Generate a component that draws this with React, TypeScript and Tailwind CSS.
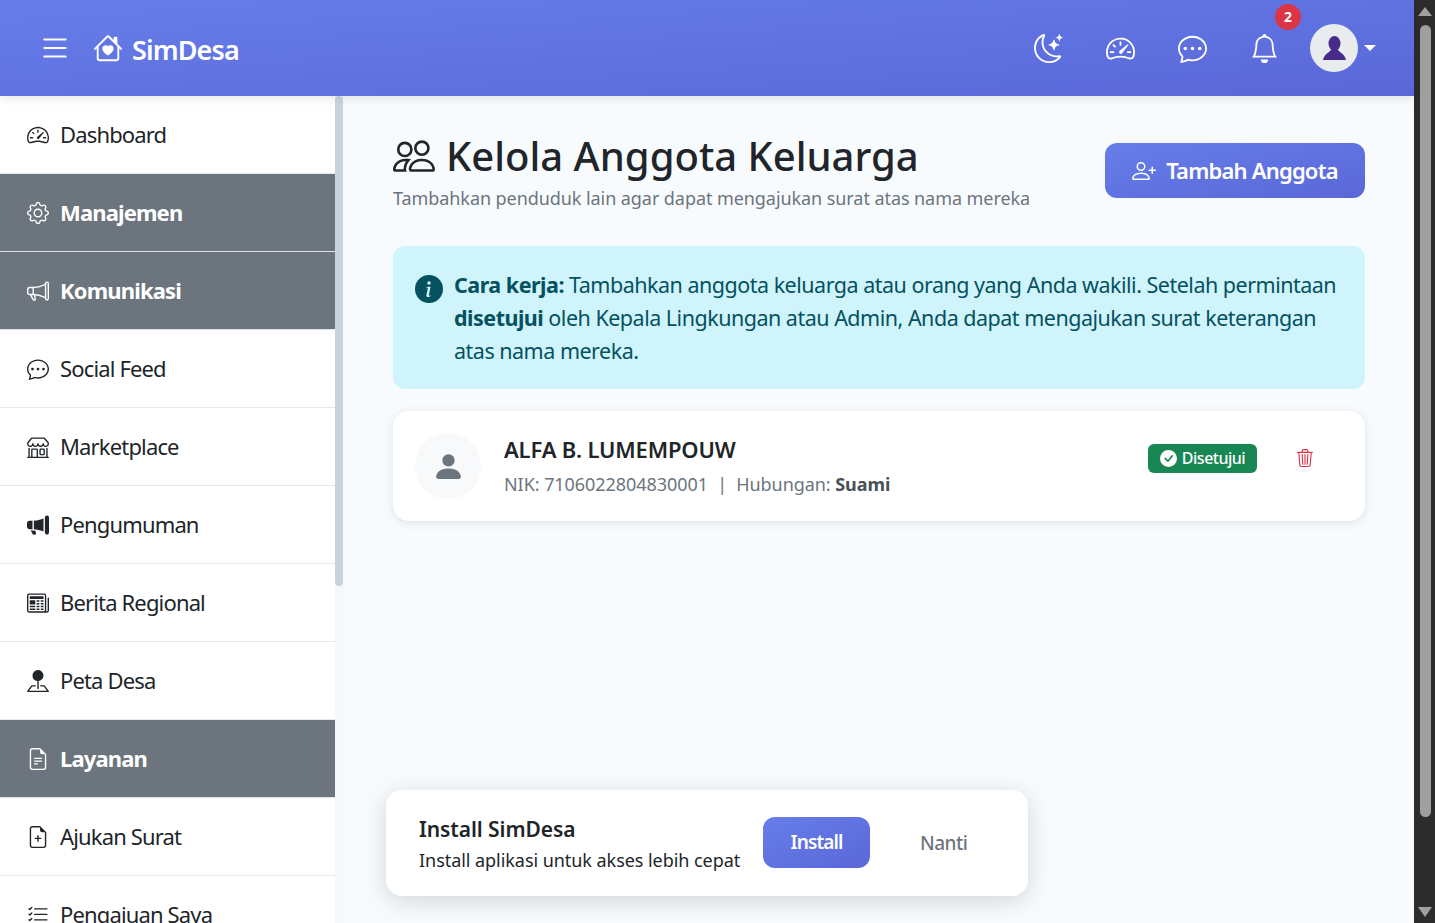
import type { IconType } from "react-icons";
import {
  BsBell,
  BsChatDots,
  BsCheckCircleFill,
  BsFileEarmarkPlus,
  BsFileEarmarkText,
  BsGear,
  BsHouseHeart,
  BsInfoCircleFill,
  BsList,
  BsListCheck,
  BsMegaphone,
  BsMegaphoneFill,
  BsMoonStars,
  BsNewspaper,
  BsPeople,
  BsPersonFill,
  BsPersonPlus,
  BsPinMapFill,
  BsShop,
  BsSpeedometer2,
  BsTrash3,
} from "react-icons/bs";

const menu: { label: string; icon: IconType; section?: boolean }[] = [
  { label: "Dashboard", icon: BsSpeedometer2 },
  { label: "Manajemen", icon: BsGear, section: true },
  { label: "Komunikasi", icon: BsMegaphone, section: true },
  { label: "Social Feed", icon: BsChatDots },
  { label: "Marketplace", icon: BsShop },
  { label: "Pengumuman", icon: BsMegaphoneFill },
  { label: "Berita Regional", icon: BsNewspaper },
  { label: "Peta Desa", icon: BsPinMapFill },
  { label: "Layanan", icon: BsFileEarmarkText, section: true },
  { label: "Ajukan Surat", icon: BsFileEarmarkPlus },
  { label: "Pengajuan Saya", icon: BsListCheck },
];

const headerIcons = [BsMoonStars, BsSpeedometer2, BsChatDots, BsBell];

function Topbar() {
  return (
    <header className="relative z-10 flex h-24 shrink-0 items-center justify-between bg-gradient-to-br from-[#667eea] to-[#5a67d8] pl-[38px] pr-[38px] text-white shadow-[0_2px_10px_rgba(0,0,0,0.1)]">
      <div className="flex items-center">
        <BsList className="h-[34px] w-[34px]" />
        <BsHouseHeart className="ml-[21px] h-[30px] w-[30px]" />
        <span className="ml-[9px] mt-1 text-[27px] font-semibold tracking-[-0.9px]">SimDesa</span>
      </div>
      <div className="flex items-center">
        {headerIcons.map((Icon, i) => (
          <div key={i} className="relative flex w-[72px] justify-center">
            <Icon className="h-[29px] w-[29px]" />
            {i === 3 && (
              <span className="absolute left-[47px] top-[-30px] flex h-[26px] w-[26px] items-center justify-center rounded-full bg-[#dc3545] text-[14px] font-bold">
                2
              </span>
            )}
          </div>
        ))}
        <div className="ml-[10px] flex h-12 w-12 items-center justify-center rounded-full bg-[#e9ecef]">
          <svg width="23" height="24" viewBox="0 0 23 24" fill="#472b8b">
            <ellipse cx="11.5" cy="7.5" rx="6" ry="7.5" />
            <path d="M0 24C1 18.5 6 16.5 8.5 13.5L14.5 13.5C17 16.5 22 18.5 23 24Z" />
          </svg>
        </div>
        <span className="ml-[6px] h-0 w-0 border-x-[6px] border-t-[6px] border-x-transparent border-t-white" />
      </div>
    </header>
  );
}

function Sidebar() {
  return (
    <aside className="flex w-[343px] shrink-0 bg-[#f5f7fa]">
      <nav className="w-[335px] overflow-hidden bg-white">
        {menu.map(({ label, icon: Icon, section }) => (
          <div
            key={label}
            className={
              section
                ? "flex h-[78px] items-center border-b border-[#dee2e6] bg-[#6c757d] pl-[27px] font-bold text-white"
                : "flex h-[78px] items-center border-b border-[#e5e7eb] pl-[27px] text-[#212529]"
            }
          >
            <Icon className="h-[22px] w-[22px] shrink-0" />
            <span className="ml-[11px] text-[22px] tracking-[-0.85px]">{label}</span>
          </div>
        ))}
      </nav>
      <div className="h-[490px] w-2 rounded-full bg-[#c9d3df]" />
    </aside>
  );
}

function MemberCard() {
  return (
    <div className="mt-[22px] flex h-[110px] items-center rounded-2xl bg-white pl-[22px] pr-[51px] shadow-[0_2px_10px_rgba(0,0,0,0.1)]">
      <div className="flex h-[66px] w-[66px] items-center justify-center rounded-full bg-[#f8f9fa]">
        <BsPersonFill className="h-[33px] w-[33px] text-[#6c757d]" />
      </div>
      <div className="mb-[2px] ml-[23px] flex-1">
        <div className="text-[22px] font-semibold tracking-[-0.17px] text-[#212529]">ALFA B. LUMEMPOUW</div>
        <div className="mt-[5px] text-[18px] tracking-[-0.06px] text-[#6c757d]">
          NIK: 7106022804830001 &nbsp;|&nbsp; Hubungan: <span className="font-bold text-[#495057]">Suami</span>
        </div>
      </div>
      <div className="mb-[16px] flex items-center">
        <span className="flex h-[29px] w-[109px] items-center justify-center gap-[5px] rounded-[6px] bg-[#198754] text-[16px] font-medium tracking-[-0.5px] text-white">
          <BsCheckCircleFill className="h-[17px] w-[17px]" />
          Disetujui
        </span>
        <BsTrash3 className="ml-[39px] h-[18px] w-[18px] text-[#dc3545]" />
      </div>
    </div>
  );
}

function InstallPrompt() {
  return (
    <div className="absolute left-[43px] top-[694px] flex h-[106px] w-[642px] items-center rounded-2xl bg-white pl-[33px] shadow-[0_5px_25px_rgba(0,0,0,0.15)]">
      <div className="w-[344px] pt-[2px]">
        <div className="text-[21px] font-semibold tracking-[-0.07px] text-[#212529]">Install SimDesa</div>
        <div className="mt-[1px] text-[18px] tracking-[-0.05px] text-[#212529]">Install aplikasi untuk akses lebih cepat</div>
      </div>
      <span className="mb-[2px] flex h-[51px] w-[107px] items-center justify-center rounded-xl bg-gradient-to-br from-[#667eea] to-[#5a67d8] text-[19px] font-semibold tracking-[-0.9px] text-white">
        Install
      </span>
      <span className="ml-[50px] text-[19px] font-medium tracking-[-0.5px] text-[#6c757d]">Nanti</span>
    </div>
  );
}

function PageScrollbar() {
  return (
    <div className="flex w-[21px] shrink-0 flex-col items-center bg-[#2c2c2c] pl-[1px] pt-[7px]">
      <span className="h-0 w-0 border-x-[7px] border-b-[9px] border-x-transparent border-b-[#9f9f9f]" />
      <div className="mt-[9px] h-[792px] w-[11px] rounded-full bg-[#9f9f9f]" />
      <span className="mt-[90px] h-0 w-0 border-x-[7px] border-t-[10px] border-x-transparent border-t-[#9f9f9f]" />
    </div>
  );
}

export default function App() {
  return (
    <div className="flex h-screen w-full overflow-hidden font-['Noto_Sans',sans-serif]">
      <div className="flex min-w-0 flex-1 flex-col">
        <Topbar />
        <div className="flex min-h-0 flex-1">
          <Sidebar />
          <main className="relative flex-1 overflow-hidden bg-[#f8fbfe] pl-[50px] pr-[49px] pt-[31px]">
            <div className="flex items-start justify-between">
              <div>
                <h1 className="flex items-center text-[40px] font-medium leading-[58px] text-[#212529]">
                  <BsPeople className="mr-[11px] h-[42px] w-[42px]" />
                  Kelola Anggota Keluarga
                </h1>
                <p className="mt-[1px] text-[18px] leading-[24px] tracking-[-0.07px] text-[#6c757d]">
                  Tambahkan penduduk lain agar dapat mengajukan surat atas nama mereka
                </p>
              </div>
              <button className="mt-4 flex h-[55px] w-[260px] items-center justify-center gap-[10px] rounded-xl bg-gradient-to-br from-[#667eea] to-[#5a67d8] text-[22px] font-semibold tracking-[-0.8px] text-white">
                <BsPersonPlus className="h-6 w-6" />
                Tambah Anggota
              </button>
            </div>
            <div className="mt-[36px] flex h-[143px] rounded-xl bg-[#cff4fc] pl-[22px] pr-[20px] pt-[22px] text-[21.5px] leading-[33px] tracking-[-0.5px] text-[#055160]">
              <BsInfoCircleFill className="mr-[11px] mt-[7px] h-7 w-7 shrink-0" />
              <div>
                <strong className="font-bold">Cara kerja:</strong> Tambahkan anggota keluarga atau orang yang Anda wakili. Setelah permintaan{" "}
                <strong className="font-bold">disetujui</strong> oleh Kepala Lingkungan atau Admin, Anda dapat mengajukan surat keterangan atas nama mereka.
              </div>
            </div>
            <MemberCard />
            <InstallPrompt />
          </main>
        </div>
      </div>
      <PageScrollbar />
    </div>
  );
}
